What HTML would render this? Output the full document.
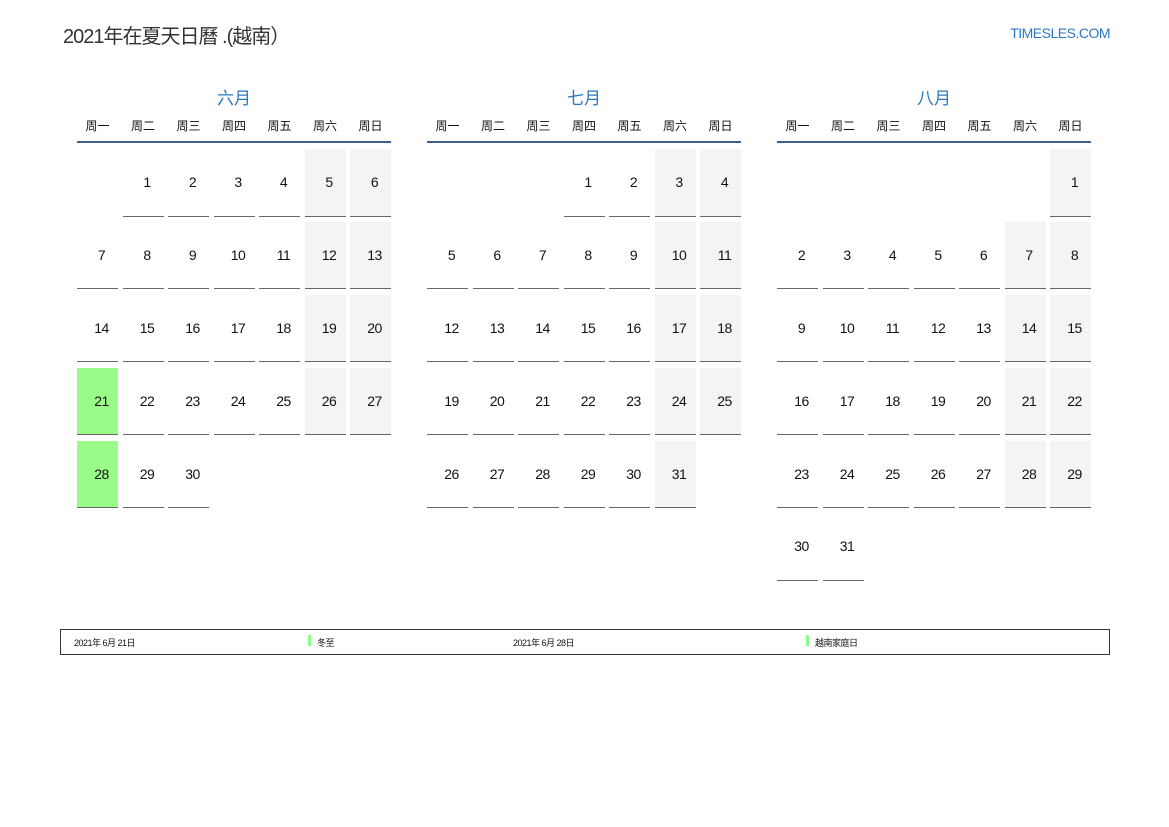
<!DOCTYPE html>
<html><head><meta charset="utf-8"><style>
*{margin:0;padding:0;box-sizing:border-box}
body{width:1169px;height:827px;background:#fff;position:relative;font-family:"Liberation Sans","Noto Sans CJK SC",sans-serif;color:#111;overflow:hidden}
.title{position:absolute;left:63px;top:20px;font-size:20px;color:#333;letter-spacing:-1px}
.site{position:absolute;right:59px;top:25px;font-size:14px;color:#2a78c2;letter-spacing:-0.5px}
.m{position:absolute;top:84px;width:314px}
.mt{text-align:center;font-size:17px;color:#2a78c2;height:24px}
.wd{display:grid;grid-template-columns:repeat(7,41px);column-gap:4.5px;margin-top:9px;font-size:12px;text-align:center;height:24px}
.hl{height:2px;background:#3d5f8e;margin-top:0}
.g{display:grid;grid-template-columns:repeat(7,41px);column-gap:4.5px;grid-auto-rows:67.5px;row-gap:5.4px;margin-top:6px}
.g div{font-size:14px;text-align:center;padding-left:8px;line-height:66px;letter-spacing:-0.5px}
.g .d{border-bottom:1.5px solid #666}
.g .w{background:#f4f4f4}
.g .h{background:#99fc88}
.leg{position:absolute;left:60px;top:629px;width:1050px;height:26px;border:1px solid #333;font-size:9px;letter-spacing:-0.5px}
.leg span{position:absolute;top:6px}
.bar{position:absolute;top:5px;width:3px;height:11px;background:#8f8}
</style></head><body>
<div class="title">2021年在夏天日曆 .(越南）</div>
<div class="site">TIMESLES.COM</div>

<div class="m" style="left:77px">
<div class="mt">六月</div>
<div class="wd"><span>周一</span><span>周二</span><span>周三</span><span>周四</span><span>周五</span><span>周六</span><span>周日</span></div>
<div class="hl"></div>
<div class="g">
<div></div><div class="d">1</div><div class="d">2</div><div class="d">3</div><div class="d">4</div><div class="d w">5</div><div class="d w">6</div>
<div class="d">7</div><div class="d">8</div><div class="d">9</div><div class="d">10</div><div class="d">11</div><div class="d w">12</div><div class="d w">13</div>
<div class="d">14</div><div class="d">15</div><div class="d">16</div><div class="d">17</div><div class="d">18</div><div class="d w">19</div><div class="d w">20</div>
<div class="d h">21</div><div class="d">22</div><div class="d">23</div><div class="d">24</div><div class="d">25</div><div class="d w">26</div><div class="d w">27</div>
<div class="d h">28</div><div class="d">29</div><div class="d">30</div>
</div></div>

<div class="m" style="left:427px">
<div class="mt">七月</div>
<div class="wd"><span>周一</span><span>周二</span><span>周三</span><span>周四</span><span>周五</span><span>周六</span><span>周日</span></div>
<div class="hl"></div>
<div class="g">
<div></div><div></div><div></div><div class="d">1</div><div class="d">2</div><div class="d w">3</div><div class="d w">4</div>
<div class="d">5</div><div class="d">6</div><div class="d">7</div><div class="d">8</div><div class="d">9</div><div class="d w">10</div><div class="d w">11</div>
<div class="d">12</div><div class="d">13</div><div class="d">14</div><div class="d">15</div><div class="d">16</div><div class="d w">17</div><div class="d w">18</div>
<div class="d">19</div><div class="d">20</div><div class="d">21</div><div class="d">22</div><div class="d">23</div><div class="d w">24</div><div class="d w">25</div>
<div class="d">26</div><div class="d">27</div><div class="d">28</div><div class="d">29</div><div class="d">30</div><div class="d w">31</div>
</div></div>

<div class="m" style="left:777px">
<div class="mt">八月</div>
<div class="wd"><span>周一</span><span>周二</span><span>周三</span><span>周四</span><span>周五</span><span>周六</span><span>周日</span></div>
<div class="hl"></div>
<div class="g">
<div></div><div></div><div></div><div></div><div></div><div></div><div class="d w">1</div>
<div class="d">2</div><div class="d">3</div><div class="d">4</div><div class="d">5</div><div class="d">6</div><div class="d w">7</div><div class="d w">8</div>
<div class="d">9</div><div class="d">10</div><div class="d">11</div><div class="d">12</div><div class="d">13</div><div class="d w">14</div><div class="d w">15</div>
<div class="d">16</div><div class="d">17</div><div class="d">18</div><div class="d">19</div><div class="d">20</div><div class="d w">21</div><div class="d w">22</div>
<div class="d">23</div><div class="d">24</div><div class="d">25</div><div class="d">26</div><div class="d">27</div><div class="d w">28</div><div class="d w">29</div>
<div class="d">30</div><div class="d">31</div>
</div></div>

<div class="leg">
<span style="left:13px">2021年 6月 21日</span>
<div class="bar" style="left:247px"></div><span style="left:256px">冬至</span>
<span style="left:452px">2021年 6月 28日</span>
<div class="bar" style="left:745px"></div><span style="left:754px">越南家庭日</span>
</div>
</body></html>
